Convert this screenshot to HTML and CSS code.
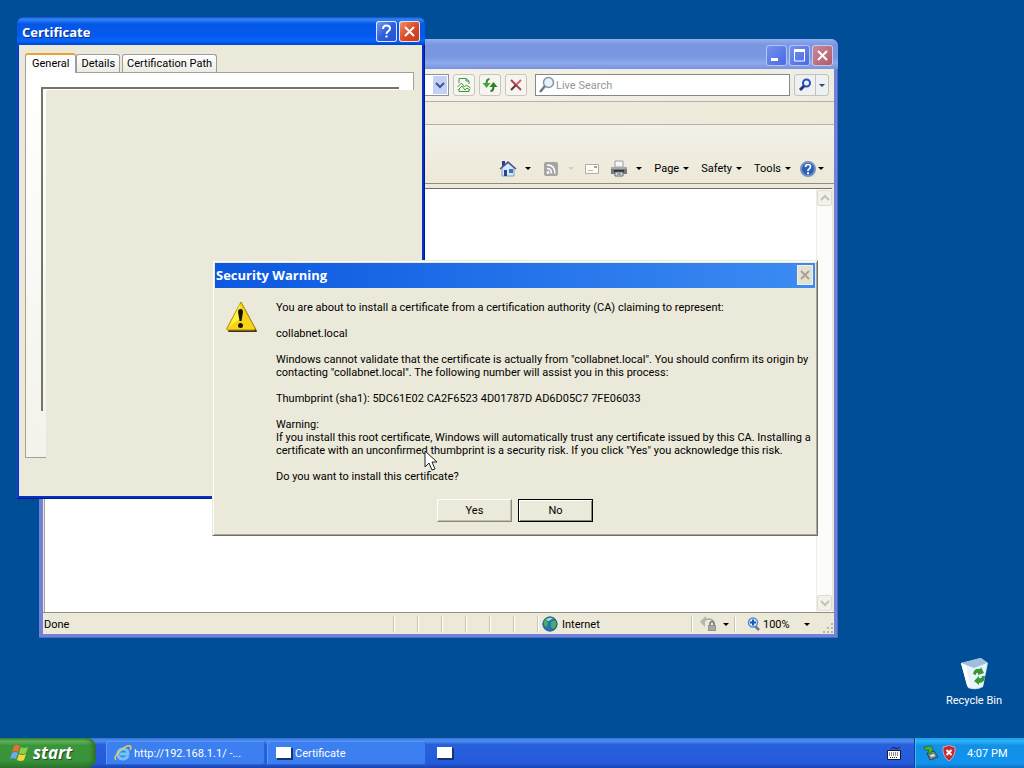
FILE: index.html
```html
<!DOCTYPE html>
<html lang="en">
<head>
    <meta charset="UTF-8">
    <meta name="viewport" content="width=device-width, initial-scale=1.0">
    <title>Desktop</title>
    <link rel="stylesheet" href="styles.css">
</head>
<body>
    <main class="desktop">
        <!-- Internet Explorer -->
        <section class="window browser">
            <div class="browser-title">
                <button class="caption-btn" aria-label="Minimize"><svg width="21" height="21" viewBox="0 0 21 21"><path d="M5 13h7v3H5z" fill="#fff"/></svg></button>
                <button class="caption-btn" aria-label="Maximize"><svg width="21" height="21" viewBox="0 0 21 21"><path d="M5 6h11M5.500 5v11h10V5" fill="none" stroke="#fff"/><path d="M5 4h11v3H5z" fill="#fff"/></svg></button>
                <button class="caption-btn close faded" aria-label="Close"><svg width="21" height="21" viewBox="0 0 21 21"><path d="M6 6l9 9M15 6l-9 9" stroke="#fff" stroke-width="2"/></svg></button>
            </div>
            <div class="browser-body">
                <div class="nav-row">
                    <div class="address">
                        <input type="text" aria-label="Address">
                        <button class="address-drop" aria-label="Show addresses"><svg width="14" height="18" viewBox="0 0 14 18"><path d="M3 7l4 4 4-4" fill="none" stroke="#3d5690" stroke-width="2"/></svg></button>
                    </div>
                    <button class="nav-btn" aria-label="Compatibility View"><svg width="16" height="16" viewBox="0 0 16 16"><path d="M3 6V1.500h7L13 4v3M3 12v2.500h10V12M10 1.500V4h3" fill="none" stroke="#3f9a3a"/><path d="M1.500 10l4-4 3 4 2-2 4 3M2 13l4-4 3 4 2-2 3 2" fill="none" stroke="#459d40"/></svg></button>
                    <button class="nav-btn" aria-label="Refresh"><svg width="16" height="16" viewBox="0 0 16 16"><path d="M7.500 2C5 2 4.500 3.500 4.500 7" fill="none" stroke="#34872c" stroke-width="2"/><path d="M0.500 6h8l-4 5z" fill="#43a638"/><path d="M8.500 14c2.500 0 3-1.500 3-5" fill="none" stroke="#2b7523" stroke-width="2"/><path d="M7.500 10h8l-4-5z" fill="#298322"/></svg></button>
                    <button class="nav-btn" aria-label="Stop"><svg width="16" height="16" viewBox="0 0 16 16"><path d="M3 3l10 10" stroke="#b04050" stroke-width="2"/><path d="M13 3L8 8" stroke="#d26473" stroke-width="2"/><path d="M8 8l-5 5" stroke="#54363d" stroke-width="2"/></svg></button>
                    <label class="search">
                        <svg width="18" height="18" viewBox="0 0 18 18"><circle cx="10.500" cy="6.500" r="5" fill="#e3f1f8" stroke="#8796a4" stroke-width="1.500"/><path d="M7 10l-5 6" stroke="#777" stroke-width="2.500"/></svg>
                        <input type="text" placeholder="Live Search" aria-label="Live Search">
                    </label>
                    <div class="search-go">
                        <button aria-label="Search"><svg width="14" height="14" viewBox="0 0 14 14"><circle cx="8.500" cy="5" r="3.500" fill="none" stroke="#244fc0" stroke-width="2"/><path d="M6 8l-4 4" stroke="#20337c" stroke-width="3"/></svg></button>
                        <button class="narrow" aria-label="Search options"><i class="arrow blue"></i></button>
                    </div>
                </div>
                <div class="menu-row"></div>
                <div class="command-row">
                    <button class="cmd home" aria-label="Home"><svg width="18" height="18" viewBox="0 0 18 18"><path d="M3 1h3v5H3z" fill="#33358e"/><path d="M3 8l6-5 6 5v8H3z" fill="#d8e7fb" stroke="#8199c1"/><path d="M1 9l8-7 8 7" fill="none" stroke="#4a4f93" stroke-width="1.500"/><path d="M5 10h3v6H5z" fill="#26478b"/><path d="M10 9h4v4h-4z" fill="#3975bd"/></svg><i class="arrow"></i></button>
                    <button class="cmd feed" aria-label="Feeds" disabled><svg width="16" height="16" viewBox="0 0 16 16"><rect x="1" y="1" width="14" height="14" rx="2" fill="#a5a5a1"/><circle cx="5" cy="11.500" r="1.500" fill="#fff"/><path d="M4 7.500q4.500 0 4.500 5M4 4q8 0 8 8.500" fill="none" stroke="#fff" stroke-width="1.500"/></svg><i class="arrow pale"></i></button>
                    <button class="cmd mail" aria-label="Read mail"><svg width="16" height="16" viewBox="0 0 16 16"><path d="M1.500 3.500h13v9h-13z" fill="#fbfaf6" stroke="#b6ada2"/><path d="M10 5h3v2h-3z" fill="#c79a88"/><path d="M4 9.500h5" stroke="#bcb8b0"/></svg></button>
                    <button class="cmd print" aria-label="Print"><svg width="18" height="18" viewBox="0 0 18 18"><path d="M5 1h8v6H5z" fill="#f3f5f6" stroke="#9ba0a4"/><path d="M1 7h16v7H1z" fill="#77797c"/><path d="M1 7h16v2H1z" fill="#a7a9aa"/><path d="M4 10h10v2H4z" fill="#303236"/><path d="M5 12h8v4H5z" fill="#dfe3e9" stroke="#65686d"/><path d="M7 14h4" stroke="#3b60a5"/></svg><i class="arrow"></i></button>
                    <button class="cmd">Page<i class="arrow"></i></button>
                    <button class="cmd">Safety<i class="arrow"></i></button>
                    <button class="cmd">Tools<i class="arrow"></i></button>
                    <button class="cmd help" aria-label="Help"><svg width="16" height="16" viewBox="0 0 16 16"><circle cx="8" cy="8" r="7" fill="#2960bc" stroke="#7790bd" stroke-width="2"/><path d="M5.500 6q0-2.500 2.500-2.500t2.500 2.300q0 1.400-1.500 2.200-1 .5-1 2" fill="none" stroke="#fff" stroke-width="1.700"/><path d="M7 11.200h2v2H7z" fill="#fff"/></svg><i class="arrow"></i></button>
                </div>
                <div class="page-view">
                    <div class="scrollbar">
                        <button aria-label="Scroll up"><svg width="14" height="14" viewBox="0 0 14 14"><path d="M3 9l4-4 4 4" fill="none" stroke="#c3c2b7" stroke-width="2"/></svg></button>
                        <button aria-label="Scroll down"><svg width="14" height="14" viewBox="0 0 14 14"><path d="M3 5l4 4 4-4" fill="none" stroke="#c3c2b7" stroke-width="2"/></svg></button>
                    </div>
                </div>
                <div class="status-bar">
                    <span class="status-text">Done</span>
                    <span class="pane"></span><span class="pane"></span><span class="pane"></span><span class="pane"></span><span class="pane"></span><span class="pane"></span>
                    <span class="pane zone"><svg width="16" height="16" viewBox="0 0 16 16"><circle cx="8" cy="8" r="7.500" fill="#2b72b4"/><path d="M2 5q3-5 7-4l-1 3-3 1 1 3-2 3q-3-2-2-6zM9 6l4-2 2 4-3 5-3-2z" fill="#48af60"/><path d="M4 4q3-3 7-2L7 5z" fill="#a9e0ce"/><circle cx="8" cy="8" r="7" fill="none" stroke="#24658d"/></svg>Internet</span>
                    <span class="pane protect"><svg width="18" height="16" viewBox="0 0 18 16"><path d="M1 6l4-4v2q8-3 9 4" fill="none" stroke="#a9a9a4" stroke-width="1.500"/><path d="M0 6l5-5v10z" fill="#b8b8b3"/><path d="M10 9V7q2-3 4 0v2" fill="none" stroke="#777" stroke-width="1.500"/><path d="M8 9h8v6H8z" fill="#92928e"/><path d="M9 11h6M9 13h6" stroke="#c4c4be"/></svg><i class="arrow"></i></span>
                    <span class="pane zoom"><svg width="14" height="14" viewBox="0 0 14 14"><path d="M8 9l4 4" stroke="#76777b" stroke-width="2.500"/><circle cx="6" cy="5.500" r="4.500" fill="#d9ebfb" stroke="#5590d0" stroke-width="1.500"/><path d="M3 5.500h6M6 2.500v6" stroke="#1959b1" stroke-width="2"/></svg><span>100%</span><i class="arrow"></i></span>
                    <svg class="grip" width="12" height="12" viewBox="0 0 12 12"><path d="M9 1h2v2H9zM5 5h2v2H5zM9 5h2v2H9zM1 9h2v2H1zM5 9h2v2H5zM9 9h2v2H9z" fill="#b9b6a5"/></svg>
                </div>
            </div>
        </section>

        <!-- Certificate properties -->
        <section class="window certificate">
            <div class="cert-title">
                <h2>Certificate</h2>
                <button class="caption-btn" aria-label="Help"><svg width="21" height="21" viewBox="0 0 21 21"><path d="M7 8q0-3.500 3.500-3.500T14 7.500q0 1.500-2 2.800-1.500.9-1.500 2.700" fill="none" stroke="#fff" stroke-width="2"/><path d="M9.500 14.500h2v2h-2z" fill="#fff"/></svg></button>
                <button class="caption-btn close" aria-label="Close"><svg width="21" height="21" viewBox="0 0 21 21"><path d="M6 6l9 9M15 6l-9 9" stroke="#fff" stroke-width="2"/></svg></button>
            </div>
            <div class="cert-body">
                <div class="tabs">
                    <button class="tab active">General</button>
                    <button class="tab">Details</button>
                    <button class="tab">Certification Path</button>
                </div>
                <div class="tab-page">
                    <div class="cert-info"></div>
                    <div class="unpainted"></div>
                </div>
            </div>
        </section>

        <!-- Security Warning -->
        <section class="window warning" role="dialog" aria-labelledby="warning-title">
            <div class="warning-title">
                <h2 id="warning-title">Security Warning</h2>
                <button aria-label="Close"><svg width="14" height="16" viewBox="0 0 14 16"><path d="M3 4l8 8M11 4l-8 8" stroke="#a5a296" stroke-width="2"/></svg></button>
            </div>
            <div class="warning-body">
                <svg width="34" height="34" viewBox="0 0 34 34"><path d="M18 2.500L33 30q0 1-1 1H5q-1 0-1-1z" fill="#3c3528"/><path d="M17 1L3 27q-1 2 1 2h26q2 0 1-2z" fill="#f7d417" stroke="#ad8d10"/><path d="M16 3L5 26q6-6 12-8z" fill="#fff33b"/><path d="M14 11q0-3 2.500-3T19 11l-1.500 9h-2z" fill="#171408"/><circle cx="16.500" cy="24.500" r="2.500" fill="#171408"/></svg>
                <div class="message">
                    <p>You are about to install a certificate from a certification authority (CA) claiming to represent:</p>
                    <p>collabnet.local</p>
                    <p>Windows cannot validate that the certificate is actually from "collabnet.local". You should confirm its origin by<br>contacting "collabnet.local". The following number will assist you in this process:</p>
                    <p>Thumbprint (sha1): 5DC61E02 CA2F6523 4D01787D AD6D05C7 7FE06033</p>
                    <p>Warning:<br>If you install this root certificate, Windows will automatically trust any certificate issued by this CA. Installing a<br>certificate with an unconfirmed thumbprint is a security risk. If you click "Yes" you acknowledge this risk.</p>
                    <p>Do you want to install this certificate?</p>
                </div>
            </div>
            <div class="warning-actions">
                <button>Yes</button>
                <button class="default">No</button>
            </div>
        </section>

        <svg class="pointer" width="14" height="22" viewBox="0 0 14 22"><path d="M1 1v16l4-4 3 7 3-1-3-7h5z" fill="#fff" stroke="#222"/></svg>

        <a class="recycle-bin" href="#">
            <svg width="32" height="34" viewBox="0 0 32 34"><path d="M3 7L23 2l7 5-5 24q-7 4-15 1z" fill="#c9dcee"/><path d="M3 7l11 2L29 7l-4 23q-7 4-15 1z" fill="#e9f3fb"/><path d="M3 7L22 2l7 5-13 5z" fill="#9ebedc"/><path d="M3 7l5 2 4 22-3-1z" fill="#fff"/><path d="M15 18q1-6 7-5l1-2 3 6-6 2v-2q-2-1-2 2zM27 20q0 7-6 7v2l-5-4 5-5v2q3 1 3-2z" fill="#339a31"/></svg>
            Recycle Bin
        </a>
    </main>

    <footer class="taskbar">
        <button class="start"><svg width="20" height="20" viewBox="0 0 20 20"><path d="M4 3q3-2 6 0L8 9q-3-2-6 0z" fill="#f06a35"/><path d="M11 4q3 2 7 0l-2 6q-3 2-7 0z" fill="#8bd04a"/><path d="M2 10q3-2 6 0l-2 6q-3-2-6 0z" fill="#70a6f5"/><path d="M9 11q3 2 7 0l-2 6q-3 2-7 0z" fill="#f8d33c"/></svg>start</button>
        <div class="tasks">
            <button class="task"><svg width="18" height="18" viewBox="0 0 18 18"><path d="M14 12q-2 3-5 3-5 0-5-5t5-5q5 0 5 5H6" fill="none" stroke="#75c4f8" stroke-width="3"/><path d="M2 16q-3-3 4-9Q13 1 16 2q2 1 0 4" fill="none" stroke="#f0cf4e" stroke-width="1.500"/></svg>http://192.168.1.1/ -...</button>
            <button class="task"><svg width="18" height="16" viewBox="0 0 18 16"><path d="M2 3h16v12H2z" fill="#17346e"/><path d="M1 2h15v11H1z" fill="#fff"/></svg>Certificate</button>
            <button class="task bare" aria-label="Security Warning"><svg width="18" height="16" viewBox="0 0 18 16"><path d="M2 3h16v12H2z" fill="#17346e"/><path d="M1 2h15v11H1z" fill="#fff"/></svg></button>
        </div>
        <svg class="keyboard" width="14" height="14" viewBox="0 0 14 14"><path d="M4 3q2-3 4-1t5-1" fill="none" stroke="#18233e"/><path d="M.5 4.500h13v9H.5z" fill="#fff" stroke="#111b38"/><path d="M2 7h10M2 9h10M3 11.500h8" stroke="#222" stroke-dasharray="1 1"/></svg>
        <div class="tray">
            <svg width="16" height="16" viewBox="0 0 16 16"><path d="M4 8l7-2 4 6-8 3z" fill="#74868d" stroke="#27454f"/><path d="M7 10l4-1 1 2-4 1z" fill="#dbe8df"/><path d="M1 2l8-1 1 4-3 4-2-1 1-3H2z" fill="#45b335" stroke="#237735"/></svg>
            <svg width="16" height="16" viewBox="0 0 16 16"><path d="M8 0q3 2 6 2 1 9-6 14Q1 11 2 2q3 0 6-2z" fill="#ca2633" stroke="#d8a8b2"/><path d="M5.500 5l5 5M10.500 5l-5 5" stroke="#fff" stroke-width="2"/></svg>
            <time>4:07 PM</time>
        </div>
    </footer>
</body>
</html>
```

FILE: styles.css
```css
* {
    box-sizing: border-box;
}
body {
    display: flex;
    flex-direction: column;
    min-height: 100vh;
    margin: 0;
    overflow: hidden;
    background-color: #004e98;
    color: #000;
    font-family: Tahoma, Roboto, "Liberation Sans", sans-serif;
    font-size: 11px;
    line-height: 13px;
}
button, input {
    padding: 0;
    border: 0;
    background: none;
    color: inherit;
    font: inherit;
}
button {
    display: flex;
    align-items: center;
    justify-content: center;
    white-space: nowrap;
}
svg {
    display: block;
    flex: none;
}
h2, p {
    margin: 0;
}
h2 {
    flex: 1;
    color: #fff;
    font-family: "Trebuchet MS", "Open Sans", sans-serif;
    font-size: 13px;
    font-weight: 700;
    line-height: 18px;
    text-shadow: 1px 1px #0c2f8c;
}
.desktop {
    position: relative;
    flex: 1;
}
.window {
    position: absolute;
    display: flex;
    flex-direction: column;
}
.arrow {
    width: 0;
    height: 0;
    border: 3px solid transparent;
    border-top-color: #000;
    border-bottom: 0;
}
.arrow.blue {
    border-top-color: #2c477f;
}
.arrow.pale {
    border-top-color: #d0cec4;
}
.caption-btn {
    width: 21px;
    height: 21px;
    border-radius: 3px;
    background: linear-gradient(135deg, #7f9ff0, #2f5de0 50%, #2450cf);
    box-shadow: inset 0 0 0 1px #dfe8fb;
}
.caption-btn.close {
    background: linear-gradient(135deg, #f09878, #dd4a25 50%, #c23a14);
}
.caption-btn.faded {
    background: linear-gradient(135deg, #c98a9b, #b05a68);
    box-shadow: inset 0 0 0 1px #c5c9ee;
}

/* browser */
.browser {
    top: 39px;
    right: 186px;
    bottom: 100px;
    left: 39px;
    padding: 0 4px 4px;
    border-radius: 7px 7px 0 0;
    background: #7183d8;
    box-shadow: inset -1px -1px #5567c1;
}
.browser-title {
    display: flex;
    align-items: center;
    justify-content: flex-end;
    gap: 2px;
    height: 30px;
    margin: 0 -4px;
    padding: 3px 5px 0 0;
    border-radius: 7px 7px 0 0;
    background: linear-gradient(#92aff0, #7995e0 20%, #7a97e2 60%, #8eaaec 80%, #7992df);
}
.browser-title .caption-btn:not(.close) {
    background: linear-gradient(135deg, #7893ec, #4568e5);
    box-shadow: inset 0 0 0 1px #b4c5f4;
}
.browser-body {
    display: flex;
    flex: 1;
    flex-direction: column;
    background: #ece9d8;
}
.nav-row {
    display: flex;
    align-items: center;
    gap: 4px;
    height: 33px;
    padding-right: 5px;
    border-bottom: 1px solid #b3b1a6;
    background: linear-gradient(90deg, #f7f6f1, #efeddf);
}
.address {
    display: flex;
    align-items: center;
    width: 406px;
    height: 22px;
    padding-right: 1px;
    border: 1px solid #8c939b;
    background: #fff;
}
.address input {
    flex: 1;
    min-width: 0;
}
.address-drop {
    width: 14px;
    height: 18px;
    background: #c4d1f7;
}
.nav-btn {
    width: 22px;
    height: 22px;
    border: 1px solid #c6c6bd;
    border-radius: 3px;
    background: #f6f5ef;
}
.search {
    display: flex;
    flex: 1;
    align-items: center;
    height: 22px;
    margin-left: 4px;
    padding-left: 2px;
    border: 1px solid #82898f;
    background: #fff;
}
.search input {
    flex: 1;
    min-width: 0;
}
.search input::placeholder {
    color: #969696;
    opacity: 1;
}
.search-go {
    display: flex;
    height: 22px;
    border: 1px solid #c1c3bf;
    border-radius: 3px;
    background: #eef0f1;
}
.search-go button {
    width: 20px;
}
.search-go .narrow {
    width: 13px;
    border-left: 1px solid #c1c3bf;
}
.menu-row {
    height: 23px;
    border-bottom: 1px solid #b3b1a6;
    background: linear-gradient(90deg, #f4f2e9, #ece9d8);
}
.command-row {
    display: flex;
    align-items: center;
    justify-content: flex-end;
    gap: 12px;
    height: 59px;
    padding: 29px 10px 0 0;
    border-bottom: 1px solid #8f8d82;
    background: linear-gradient(#f3f1e8, #ece9d8);
}
.cmd {
    gap: 4px;
}
.home, .print {
    gap: 8px;
}
.feed {
    gap: 9px;
}
.feed, .mail {
    margin-right: -2px;
}
.help {
    gap: 2px;
    margin-left: -3px;
}
.page-view {
    display: flex;
    flex: 1;
    justify-content: flex-end;
    margin: 4px 2px 0 1px;
    border-top: 1px solid #6e6d66;
    border-left: 1px solid #a7a59a;
    background: #fff;
}
.scrollbar {
    display: flex;
    flex-direction: column;
    justify-content: space-between;
    width: 16px;
    padding: 1px 0;
    border-left: 1px solid #eeede5;
    background: #fcfcfa;
}
.scrollbar button {
    width: 15px;
    height: 16px;
    border: 1px solid #dedcd0;
    border-radius: 2px;
    background: #f3f2ea;
}
.status-bar {
    display: flex;
    align-items: center;
    height: 22px;
    padding-top: 1px;
    border-top: 1px solid #8f8d82;
}
.status-text {
    flex: 1;
    padding-left: 1px;
}
.pane {
    display: flex;
    align-items: center;
    gap: 4px;
    width: 24px;
    height: 16px;
    border-left: 1px solid #c9c6b5;
    box-shadow: inset 1px 0 #fff;
}
.zone {
    width: 154px;
    padding-left: 4px;
}
.protect {
    width: 43px;
    gap: 5px;
    padding-left: 8px;
}
.zoom {
    width: 88px;
    gap: 2px;
    padding-left: 12px;
}
.zoom .arrow {
    margin-left: 12px;
}
.grip {
    align-self: flex-end;
}

/* certificate */
.certificate {
    top: 17px;
    left: 17px;
    width: 408px;
    height: 482px;
    padding: 0 3px 3px 2px;
    border-radius: 7px 7px 0 0;
    background: #0a2fc4;
    box-shadow: inset -1px -1px #001a8c, inset 1px 0 #1644d8;
}
.cert-title {
    display: flex;
    align-items: center;
    gap: 2px;
    height: 28px;
    margin: 0 -3px 0 -2px;
    padding: 1px 5px 0;
    border-radius: 7px 7px 0 0;
    background: linear-gradient(#0d52c8, #3284f5 8%, #0457e6 25%, #0459ee 65%, #0765fb 85%, #0045c8);
}
.cert-body {
    flex: 1;
    padding: 8px 8px 0 6px;
    background: #ebe9d9;
}
.tabs {
    display: flex;
    align-items: flex-end;
    height: 19px;
}
.tab {
    height: 18px;
    margin-right: 2px;
    padding: 0 4px;
    border: 1px solid #9a9e9c;
    border-bottom: 0;
    border-radius: 3px 3px 0 0;
    background: linear-gradient(#fff, #ecebe3);
}
.tab.active {
    position: relative;
    z-index: 1;
    height: 20px;
    margin: 0 0 -1px;
    padding: 0 6px 2px;
    border-top: 2px solid #eda139;
    background: #fcfcfb;
}
.tab-page {
    position: relative;
    height: 386px;
    padding: 14px 14px 46px 15px;
    border: 1px solid #a3a295;
    background: linear-gradient(#fff, #f3f3eb);
}
.cert-info {
    height: 100%;
    border: 2px solid #74736c;
    border-right: 0;
    border-bottom: 0;
}
/* area the dialog has not drawn yet */
.unpainted {
    position: absolute;
    top: 17px;
    right: -1px;
    bottom: -1px;
    left: 20px;
    border-radius: 3px 0 0;
    background: #ebe9d9;
}

/* security warning */
.warning {
    top: 260px;
    left: 212px;
    width: 606px;
    padding: 2px;
    border: 1px solid;
    border-color: #ece9d8 #716f64 #716f64 #ece9d8;
    background: #ebe9d9;
    box-shadow: inset 1px 1px #fff, inset -1px -1px #aca899;
}
.warning-title {
    display: flex;
    align-items: center;
    height: 25px;
    padding: 0 2px 1px 1px;
    background: linear-gradient(90deg, #0c58e0, #3c8cf3);
}
.warning-title h2 {
    text-shadow: none;
}
.warning-title button {
    width: 16px;
    height: 20px;
    border: 1px solid #f3f1e5;
    background: #e4e1d1;
}
.warning-body {
    display: flex;
    gap: 18px;
    padding: 13px 9px 0;
}
.message {
    display: flex;
    flex-direction: column;
    gap: 13px;
    white-space: nowrap;
}
.warning-actions {
    display: flex;
    justify-content: center;
    gap: 6px;
    padding: 16px 0 11px;
}
.warning-actions button {
    width: 75px;
    height: 23px;
    border: 1px solid;
    border-color: #fff #8a887c #8a887c #fff;
    background: #ebe9d9;
    box-shadow: inset -1px -1px #c2bfae;
}
.warning-actions .default {
    border-color: #000;
    box-shadow: inset 1px 1px #fff, inset -1px -1px #8a887c;
}
.pointer {
    position: absolute;
    top: 450px;
    left: 424px;
}
.recycle-bin {
    position: absolute;
    right: 16px;
    bottom: 31px;
    display: flex;
    flex-direction: column;
    align-items: center;
    gap: 4px;
    width: 68px;
    color: #fff;
    text-decoration: none;
    white-space: nowrap;
}

/* taskbar */
.taskbar {
    display: flex;
    align-items: center;
    height: 30px;
    background: linear-gradient(#3672dc, #4f8ff0 10%, #2860dc 22%, #245adb 85%, #1a44ae);
    color: #fff;
}
.start {
    align-self: stretch;
    justify-content: flex-start;
    gap: 3px;
    width: 96px;
    padding-left: 10px;
    border-radius: 0 9px 9px 0;
    background: linear-gradient(#3d8f3d, #62b45e 10%, #3a953a 25%, #38943a 75%, #2c752d);
    box-shadow: inset -3px 0 4px #2c6e2c;
    font-family: "Trebuchet MS", "Open Sans", sans-serif;
    font-size: 17px;
    font-style: italic;
    font-weight: 700;
    line-height: 24px;
    text-shadow: 1px 1px 1px #1d4a1c;
}
.tasks {
    display: flex;
    flex: 1;
    gap: 2px;
    padding: 0 0 0 10px;
}
.task {
    justify-content: flex-start;
    gap: 2px;
    width: 159px;
    height: 24px;
    padding-left: 8px;
    border-radius: 2px;
    background: #3c7ff0;
    box-shadow: inset 1px 1px #5c98f7, inset -1px -1px #2b62d2;
}
.task.bare {
    width: 36px;
    background: none;
    box-shadow: none;
}
.keyboard {
    margin-right: 13px;
}
.tray {
    display: flex;
    align-items: center;
    align-self: stretch;
    gap: 2px;
    width: 110px;
    padding-left: 8px;
    border-left: 1px solid #0e3e9b;
    background: linear-gradient(#16a0ee, #2cb3f6 10%, #1290e8 25%, #1193ec 85%, #0f6fc4);
    box-shadow: inset 1px 0 #39c0fb;
}
.tray time {
    margin-left: 8px;
}
```
